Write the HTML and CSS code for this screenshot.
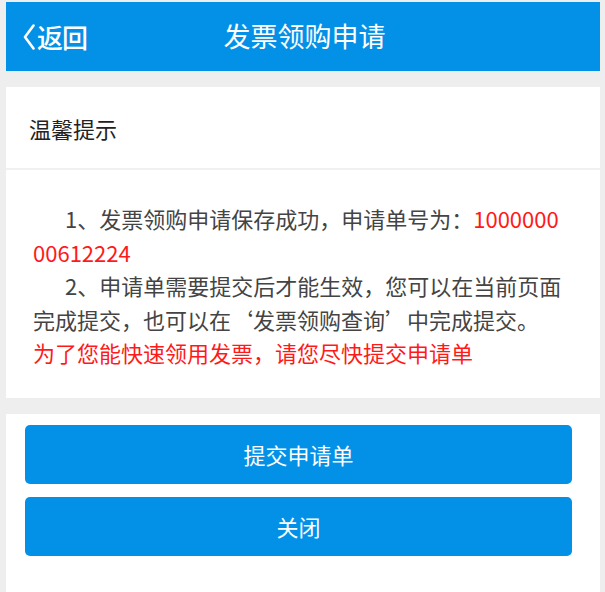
FILE: index.html
```html
<!DOCTYPE html>
<html lang="zh-CN">
<head>
<meta charset="utf-8">
<title>发票领购申请</title>
<link rel="stylesheet" href="styles.css">
</head>
<body>
<div class="page">
  <header class="topbar">
    <a class="back" href="#">
      <svg class="chev" width="12" height="26" viewBox="0 0 12 26" aria-hidden="true"><path d="M10.5 1.5 L2 13 L10.5 24.5" fill="none" stroke="#fff" stroke-width="2.6" stroke-linecap="round" stroke-linejoin="round"/></svg>
      <span>返回</span>
    </a>
    <h1 class="title">发票领购申请</h1>
  </header>
  <section class="card">
    <div class="card-head">温馨提示</div>
    <div class="card-body">
      <p class="para">1、发票领购申请保存成功，申请单号为：<span class="red">100000000612224</span></p>
      <p class="para">2、申请单需要提交后才能生效，您可以在当前页面完成提交，也可以在‘发票领购查询’中完成提交。</p>
      <p class="red">为了您能快速领用发票，请您尽快提交申请单</p>
    </div>
  </section>
  <section class="actions">
    <button class="btn" type="button">提交申请单</button>
    <button class="btn" type="button">关闭</button>
  </section>
</div>
</body>
</html>
```

FILE: styles.css
```css
* { box-sizing: border-box; }
html, body { height: 100%; }
body {
  margin: 0;
  padding: 2px 5px 0 6px;
  background: #eeeeee;
  font-family: "Noto Sans CJK SC", "Noto Sans", sans-serif;
  overflow: hidden;
}
.page {
  display: flex;
  flex-direction: column;
  gap: 16px;
  min-height: 100%;
}
.topbar {
  position: relative;
  height: 69px;
  background: #0391e8;
  display: flex;
  align-items: center;
  justify-content: center;
  color: #fff;
}
.back {
  position: absolute;
  left: 17px;
  top: 0;
  bottom: 0;
  display: flex;
  align-items: center;
  gap: 2px;
  color: #fff;
  text-decoration: none;
  font-size: 26px;
  font-weight: 500;
  letter-spacing: -1px;
}
.title {
  margin: 0 0 2px;
  font-size: 27px;
  font-weight: 400;
  padding-left: 3px;
}
.card {
  background: #fff;
}
.card-head {
  height: 83px;
  display: flex;
  align-items: center;
  padding-left: 23px;
  font-size: 22px;
  color: #222;
  border-bottom: 2px solid #f0f0f0;
}
.card-body {
  padding: 32px 33px 28px 27px;
  font-size: 22px;
  line-height: 33.5px;
  color: #444;
  word-break: break-all;
}
.card-body p { margin: 0; }
.para { text-indent: 32px; }
.red { color: #ff1a1a; }
.actions {
  flex: 1;
  background: #fff;
  display: flex;
  flex-direction: column;
  gap: 13px;
  padding: 11px 28px 20px 19px;
}
.btn {
  height: 59px;
  border: 0;
  border-radius: 5px;
  background: #0391e8;
  color: #fff;
  font-family: inherit;
  font-size: 22px;
}
```
